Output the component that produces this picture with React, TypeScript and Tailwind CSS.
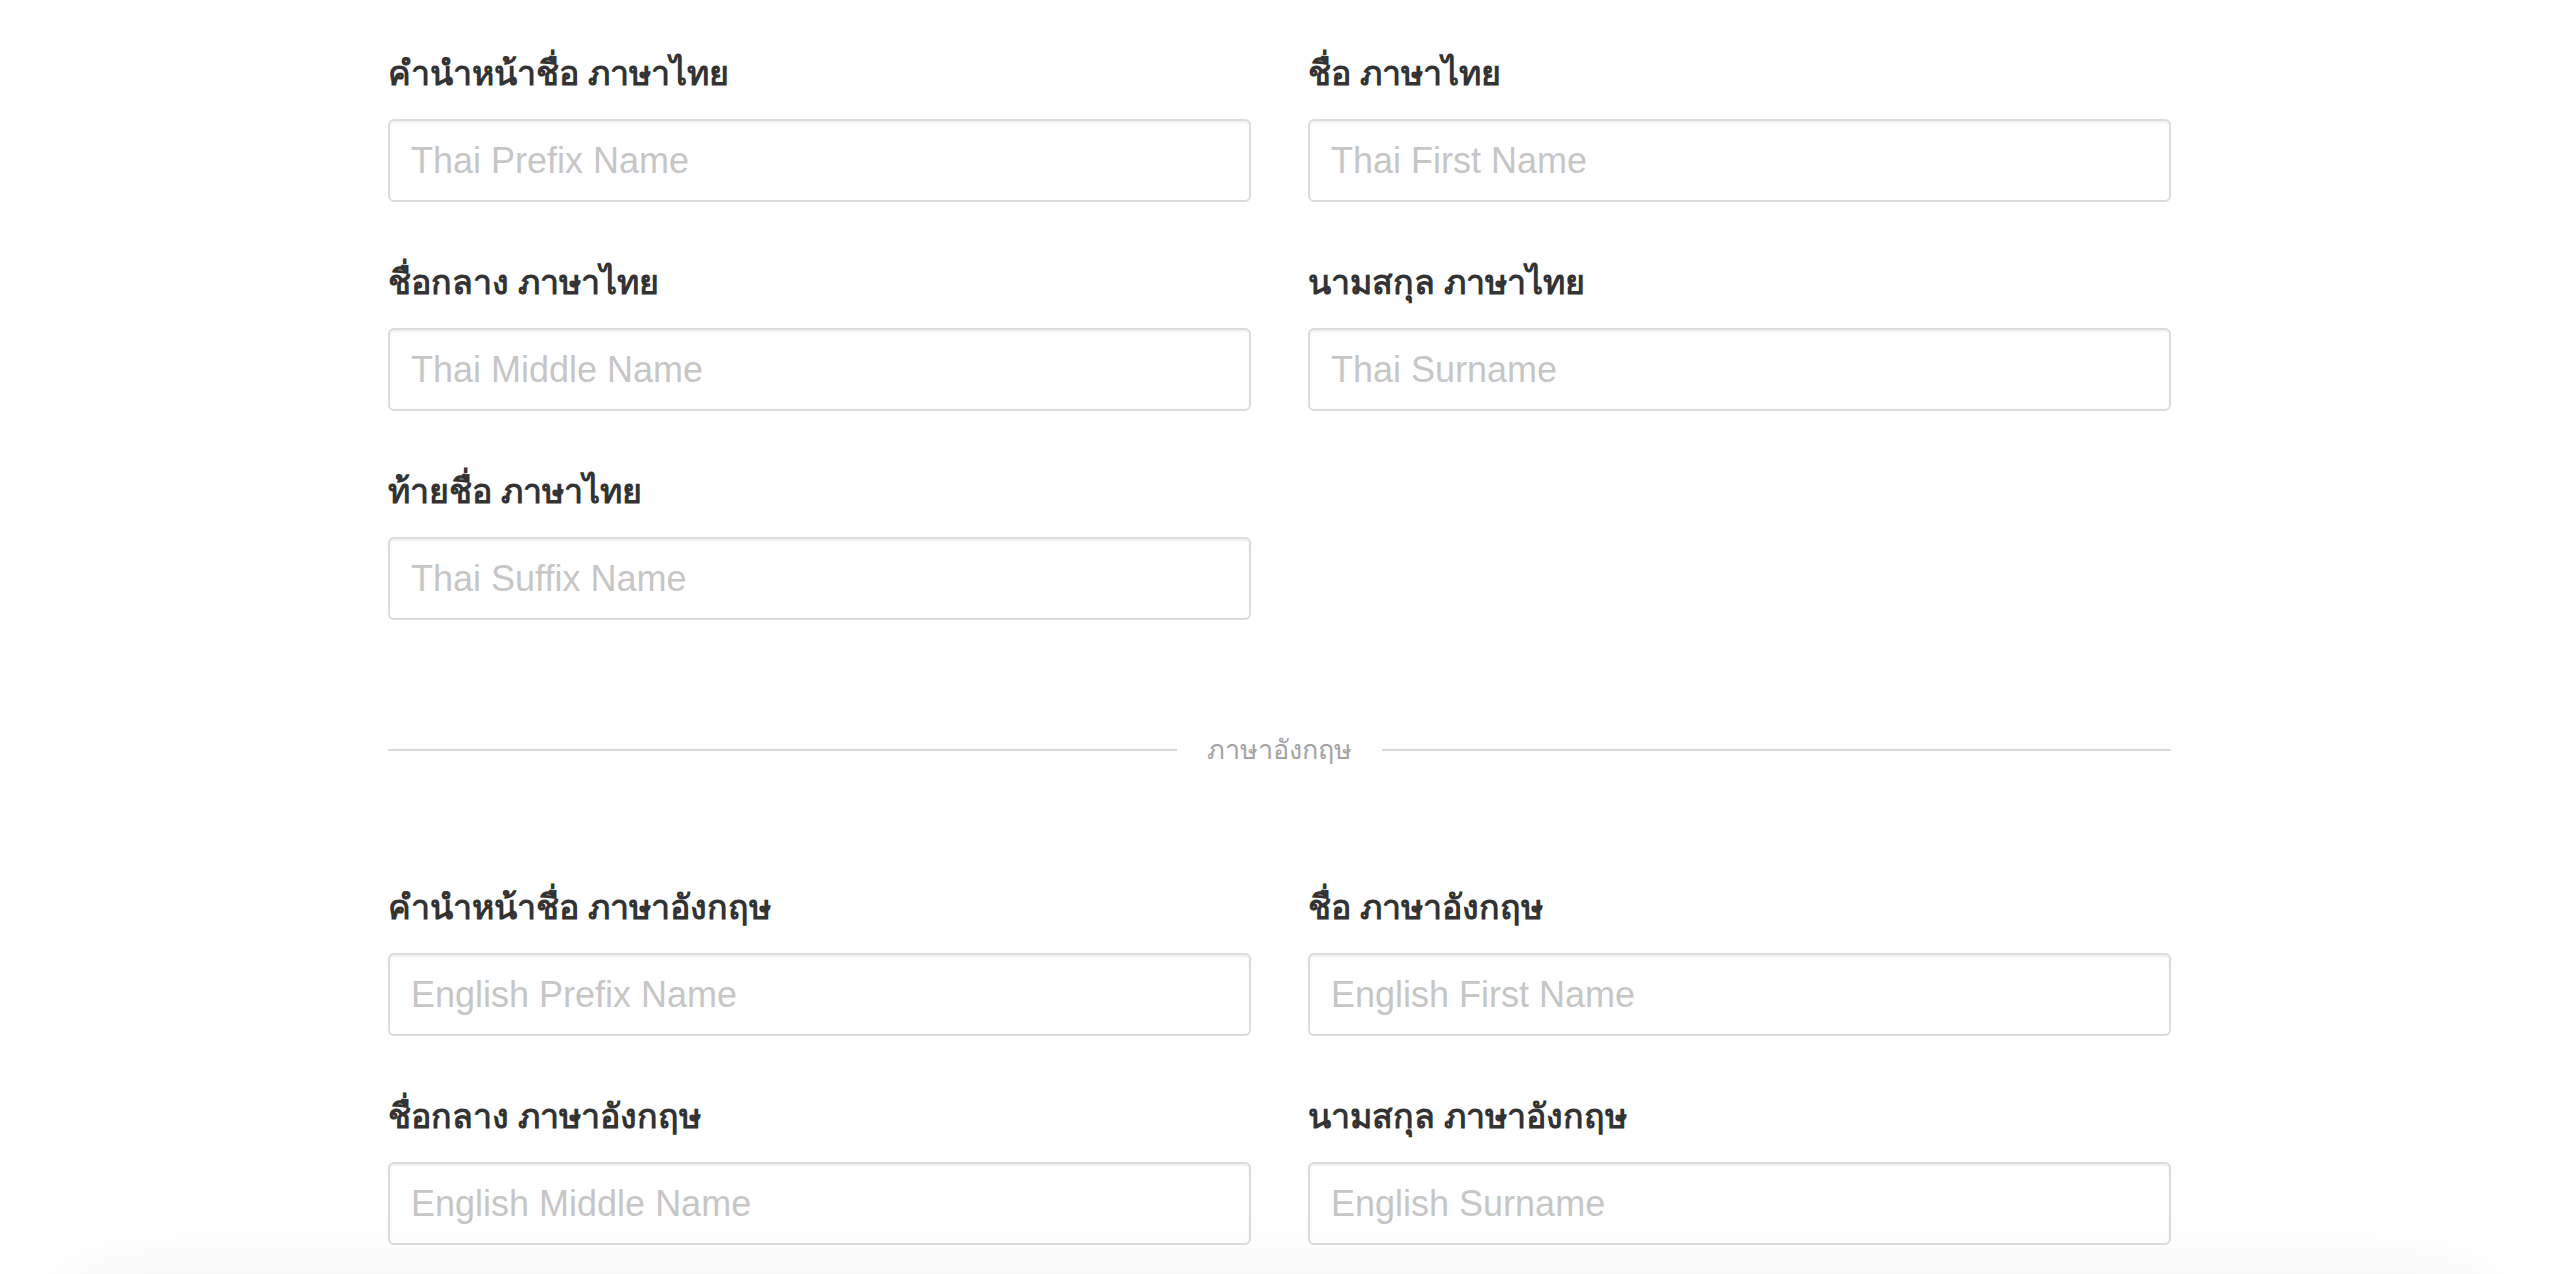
import React from "react";

// Name form — Thai and English name fields in a two-column grid.

type Field = { label: string; placeholder: string };

const thaiFields: Field[] = [
  { label: "คำนำหน้าชื่อ ภาษาไทย", placeholder: "Thai Prefix Name" },
  { label: "ชื่อ ภาษาไทย", placeholder: "Thai First Name" },
  { label: "ชื่อกลาง ภาษาไทย", placeholder: "Thai Middle Name" },
  { label: "นามสกุล ภาษาไทย", placeholder: "Thai Surname" },
  { label: "ท้ายชื่อ ภาษาไทย", placeholder: "Thai Suffix Name" },
];

const englishFields: Field[] = [
  { label: "คำนำหน้าชื่อ ภาษาอังกฤษ", placeholder: "English Prefix Name" },
  { label: "ชื่อ ภาษาอังกฤษ", placeholder: "English First Name" },
  { label: "ชื่อกลาง ภาษาอังกฤษ", placeholder: "English Middle Name" },
  { label: "นามสกุล ภาษาอังกฤษ", placeholder: "English Surname" },
];

function FormField({ label, placeholder }: Field) {
  return (
    <label className="flex flex-col gap-[19px]">
      <span className="text-[34px] leading-[54px] font-bold text-[#333333] font-['Liberation_Sans','Noto_Sans',sans-serif]">
        {label}
      </span>
      <input
        type="text"
        placeholder={placeholder}
        className="h-[83px] w-full rounded-[6px] border-2 border-[#dcdcdc] bg-white px-[21px] text-[36px] text-[#333333] font-['Liberation_Sans',sans-serif] shadow-[inset_0_2px_2px_rgba(0,0,0,0.06)] outline-none placeholder:text-[#c6c6c6]"
      />
    </label>
  );
}

function FieldGrid({ fields }: { fields: Field[] }) {
  return (
    <div className="grid grid-cols-2 gap-x-[57px] gap-y-[53px]">
      {fields.map((f) => (
        <FormField key={f.placeholder} {...f} />
      ))}
    </div>
  );
}

export default function App() {
  return (
    <div className="min-h-screen bg-white">
      <div className="ml-[388px] w-[1783px] pt-[46px] pb-[120px]">
        <FieldGrid fields={thaiFields} />

        {/* Section divider */}
        <div className="my-[109px] flex items-center gap-[30px]">
          <div className="h-[2px] flex-1 bg-[#dadada]" />
          <span className="text-[27px] leading-[42px] text-[#a3a3a3] font-['Liberation_Sans','Noto_Sans',sans-serif]">
            ภาษาอังกฤษ
          </span>
          <div className="h-[2px] flex-1 bg-[#dadada]" />
        </div>

        <FieldGrid fields={englishFields} />
      </div>

      {/* sticky action bar sits just below the fold; only its shadow shows */}
      <div className="fixed left-[60px] right-[60px] top-[calc(100vh+20px)] h-[120px] rounded-[60px] bg-white shadow-[0_0_90px_rgba(0,0,0,0.09)]" />
    </div>
  );
}
